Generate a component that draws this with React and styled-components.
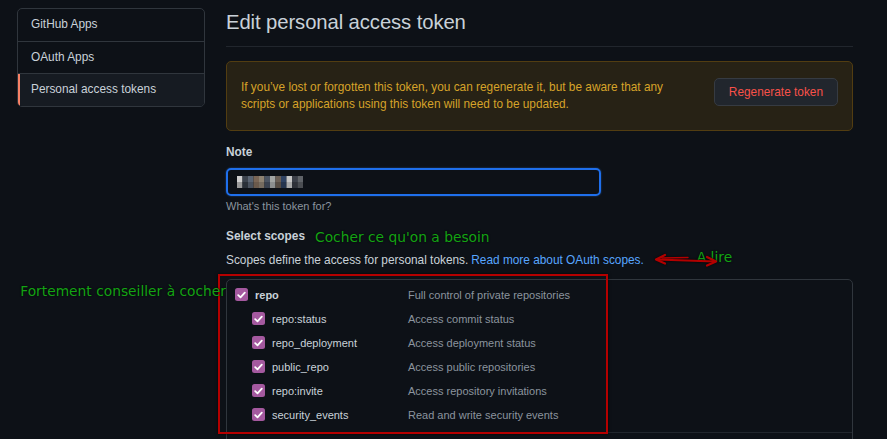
import React from "react";
import styled, { createGlobalStyle, css } from "styled-components";

const GlobalStyle = createGlobalStyle`
  html, body {
    margin: 0;
    padding: 0;
    background: #0d1117;
    overflow: hidden;
  }
  body {
    font-family: "Liberation Sans", Arial, sans-serif;
    color: #c9d1d9;
  }
`;

const Page = styled.div`
  display: flex;
  gap: 21px;
  padding: 8px 34px 0 17px;
  height: 439px;
  box-sizing: border-box;
  overflow: hidden;
`;

const Menu = styled.nav`
  flex: 0 0 188px;
  align-self: flex-start;
  border: 1px solid #30363d;
  border-radius: 5px;
  overflow: hidden;
  box-sizing: border-box;
`;

const MenuItem = styled.a`
  display: block;
  position: relative;
  padding: 7px 13px;
  font-size: 11.85px;
  line-height: 17.5px;
  color: #c9d1d9;
  text-decoration: none;
  & + & {
    border-top: 1px solid #30363d;
  }
  ${(p) =>
    p.$selected &&
    css`
      background: #161b22;
      &::before {
        content: "";
        position: absolute;
        left: 0;
        top: 0;
        bottom: 0;
        width: 2px;
        background: #f78166;
      }
    `}
`;

const Main = styled.main`
  flex: 1;
  min-width: 0;
`;

const Header = styled.div`
  padding: 2px 0 11px;
  border-bottom: 1px solid #21262d;
`;

const Title = styled.h2`
  margin: 0;
  font-size: 20.3px;
  font-weight: 400;
  line-height: 25px;
  letter-spacing: -0.1px;
  color: #c9d1d9;
`;

const Flash = styled.div`
  margin-top: 14px;
  display: flex;
  align-items: flex-start;
  justify-content: space-between;
  padding: 17px 14px;
  background: #272215;
  border: 1px solid #523d11;
  border-radius: 5px;
  color: #d6a329;
  font-size: 11.85px;
  line-height: 17px;
`;

const FlashText = styled.p`
  margin: 0;
  max-width: 440px;
`;

const Button = styled.button`
  margin-top: -1px;
  height: 28px;
  padding: 0 14px;
  background: #21262d;
  border: 1px solid #363b42;
  border-radius: 5px;
  color: #f85149;
  font-family: inherit;
  font-size: 11.85px;
  white-space: nowrap;
`;

const Label = styled.div`
  margin-top: ${(p) => p.$top || 12.5}px;
  font-size: 11.85px;
  font-weight: 700;
  line-height: 17px;
  color: #c9d1d9;
  display: flex;
  align-items: center;
  gap: 10px;
`;

const Input = styled.div`
  margin-top: 7.5px;
  width: 375px;
  height: 28px;
  box-sizing: border-box;
  border: 2px solid #1f6feb;
  border-radius: 5px;
  box-shadow: 0 0 2px rgba(56, 139, 253, 0.5);
  display: flex;
  align-items: center;
  padding: 0 9px;
`;

const Hint = styled.div`
  margin-top: 2.5px;
  font-size: 11px;
  line-height: 15px;
  color: #8b949e;
`;

const Note = styled.span`
  font-family: "DejaVu Sans", sans-serif;
  font-weight: 400;
  font-size: 13.8px;
  line-height: 18px;
  color: #14a314;
  text-shadow: 0 0 2px rgba(0, 0, 0, 0.9);
  white-space: nowrap;
  ${(p) =>
    p.$raised &&
    css`
      margin-top: -6px;
      margin-left: -21px;
    `}
`;

const Desc = styled.div`
  margin-top: 6px;
  display: flex;
  align-items: center;
  font-size: 11.85px;
  line-height: 17px;
  color: #c9d1d9;
`;

const Link = styled.a`
  margin-left: 3px;
  color: #58a6ff;
  text-decoration: none;
`;

const Arrow = styled.svg`
  margin-left: 10px;
  filter: drop-shadow(0 0 1px rgba(0, 0, 0, 0.8));
`;

const ScopesArea = styled.div`
  position: relative;
  margin-top: 10px;
`;

const ScopesBox = styled.div`
  border: 1px solid #30363d;
  border-radius: 5px;
`;

const Group = styled.div`
  padding: 3px 0 5px;
  min-height: 24px;
  & + & {
    border-top: 1px solid #21262d;
  }
`;

const Row = styled.div`
  display: flex;
  align-items: center;
  height: 24px;
  padding-left: ${(p) => 8 + p.$indent}px;
  font-size: 11px;
`;

const CheckBox = styled.span`
  flex: 0 0 13px;
  height: 13px;
  border-radius: 2.5px;
  background: #a4599f;
  display: flex;
  align-items: center;
  justify-content: center;
`;

const ScopeName = styled.span`
  flex: 0 0 ${(p) => 153 - p.$indent}px;
  margin-left: 7px;
  color: #c9d1d9;
  font-weight: ${(p) => (p.$bold ? 700 : 400)};
`;

const ScopeDesc = styled.span`
  color: #8b949e;
`;

const RedFrame = styled.div`
  position: absolute;
  left: -8px;
  top: -5px;
  width: 390px;
  height: 160px;
  box-sizing: border-box;
  border: 2px solid #b40000;
  box-shadow: 0 0 3px rgba(0, 0, 0, 0.7);
  pointer-events: none;
`;

const SideNote = styled(Note)`
  position: absolute;
  right: 100%;
  top: 3px;
`;

const Check = () => (
  <CheckBox>
    <svg width="9" height="8" viewBox="0 0 9 8">
      <path
        d="M1.2 4.2 L3.5 6.3 L7.8 1.6"
        stroke="#fff"
        strokeWidth="1.8"
        fill="none"
        strokeLinecap="round"
        strokeLinejoin="round"
      />
    </svg>
  </CheckBox>
);

// pixelated (censored) note value
const blur = [
  ["#cfcfcf", "#3c434d", "#5b6573", "#7a6656", "#8d8272", "#4b5462", "#a2a5a4", "#6a5f56", "#2f4262", "#c6c6c6", "#3b3f48", "#5f6368"],
  ["#9a9a9a", "#2a3038", "#4a525e", "#6b5a4c", "#766c60", "#3a4250", "#8c8f90", "#564c44", "#26354e", "#a9a9a9", "#2e3138", "#4a4d52"],
];

const Censored = () => (
  <svg width="66" height="12" viewBox="0 0 66 12">
    {blur.map((row, y) =>
      row.map((c, x) => <rect key={`${x}-${y}`} x={x * 5.5} y={y * 6} width="5.5" height="6" fill={c} />)
    )}
  </svg>
);

const scopes = [
  { name: "repo", desc: "Full control of private repositories", indent: 0 },
  { name: "repo:status", desc: "Access commit status", indent: 17 },
  { name: "repo_deployment", desc: "Access deployment status", indent: 17 },
  { name: "public_repo", desc: "Access public repositories", indent: 17 },
  { name: "repo:invite", desc: "Access repository invitations", indent: 17 },
  { name: "security_events", desc: "Read and write security events", indent: 17 },
];

const App = () => {
  return (
    <>
      <GlobalStyle />
      <Page>
        <Menu>
          <MenuItem>GitHub Apps</MenuItem>
          <MenuItem>OAuth Apps</MenuItem>
          <MenuItem $selected>Personal access tokens</MenuItem>
        </Menu>
        <Main>
          <Header>
            <Title>Edit personal access token</Title>
          </Header>
          <Flash>
            <FlashText>
              If you’ve lost or forgotten this token, you can regenerate it, but be aware that any scripts or
              applications using this token will need to be updated.
            </FlashText>
            <Button>Regenerate token</Button>
          </Flash>
          <Label>Note</Label>
          <Input>
            <Censored />
          </Input>
          <Hint>What's this token for?</Hint>
          <Label $top={14}>
            Select scopes
            <Note>Cocher ce qu'on a besoin</Note>
          </Label>
          <Desc>
            Scopes define the access for personal tokens.
            <Link>Read more about OAuth scopes.</Link>
            <Arrow width="64" height="14" viewBox="0 0 64 14">
              <g stroke="#b30000" strokeWidth="2.2" fill="none" strokeLinecap="round" strokeLinejoin="round">
                <path d="M3 6.5 L61 8.5" />
                <path d="M11 2 L2 6.5 L11 10.5" />
                <path d="M53 4 L62 8.5 L53 12.5" />
                <path d="M8 5 L34 4.5" strokeWidth="1.4" />
              </g>
            </Arrow>
            <Note $raised>A lire</Note>
          </Desc>
          <ScopesArea>
            <ScopesBox>
              <Group>
                {scopes.map((s) => (
                  <Row key={s.name} $indent={s.indent}>
                    <Check />
                    <ScopeName $indent={s.indent} $bold={s.indent === 0}>
                      {s.name}
                    </ScopeName>
                    <ScopeDesc>{s.desc}</ScopeDesc>
                  </Row>
                ))}
              </Group>
              <Group />
            </ScopesBox>
            <RedFrame />
            <SideNote>Fortement conseiller à cocher</SideNote>
          </ScopesArea>
        </Main>
      </Page>
    </>
  );
};

export default App;
